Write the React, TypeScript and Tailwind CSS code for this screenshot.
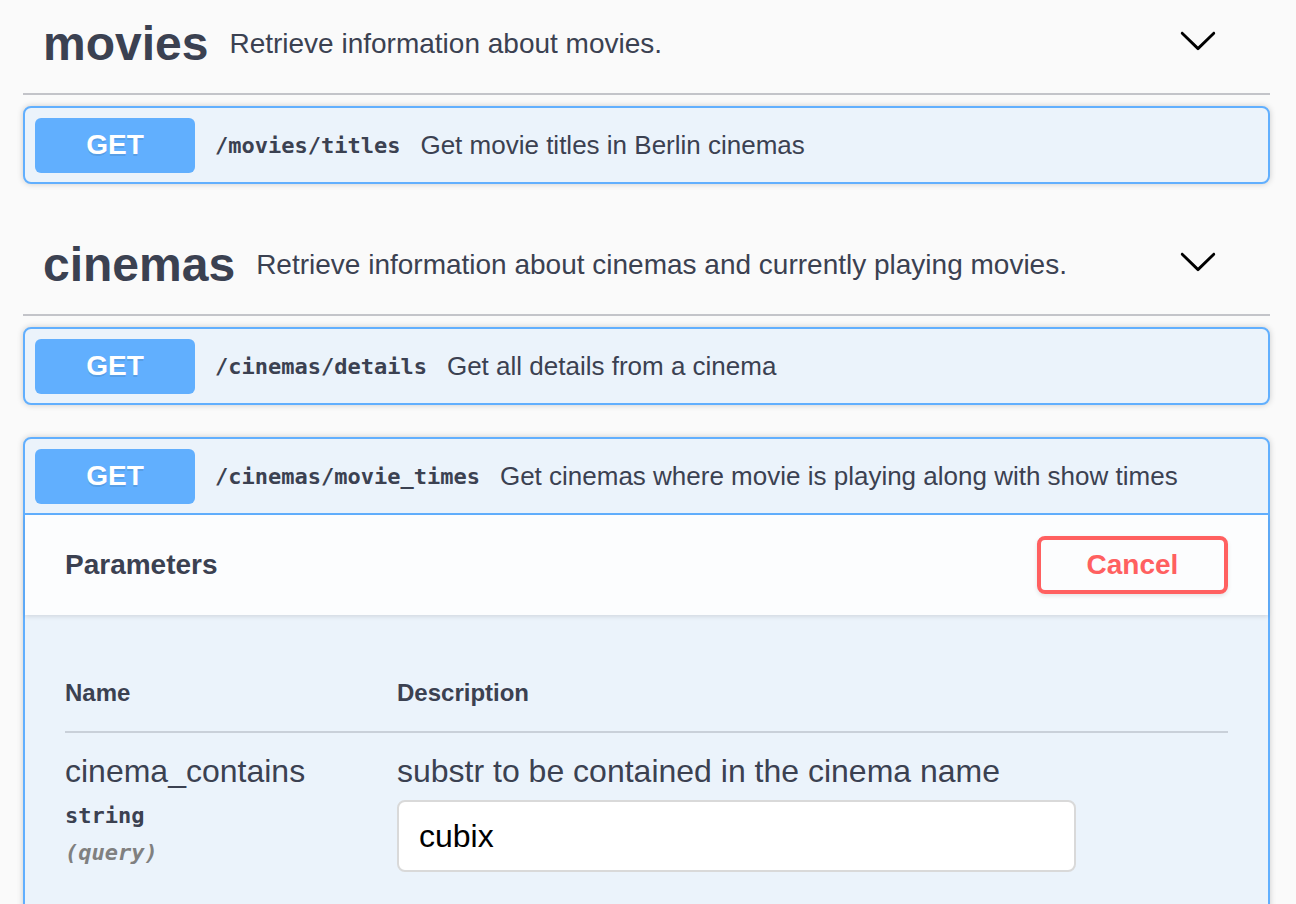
import React from "react";

const sans = "font-['Liberation_Sans',Arial,sans-serif]";
const mono = "font-['DejaVu_Sans_Mono','Liberation_Mono',monospace]";

function Chevron() {
  return (
    <svg width="40" height="40" viewBox="0 0 20 20" className="ml-auto mr-[12px] mb-[8px] shrink-0" aria-hidden="true">
      <path
        fill="#000"
        d="M17.418 6.109c.272-.268.709-.268.979 0s.271.701 0 .969l-7.908 7.83c-.27.268-.707.268-.979 0l-7.908-7.83c-.27-.268-.27-.701 0-.969.271-.268.709-.268.979 0L10 13.25l7.418-7.141z"
      />
    </svg>
  );
}

function TagHeading({ name, desc, className = "" }: { name: string; desc: string; className?: string }) {
  return (
    <div className={`flex items-center h-[100px] border-b-2 border-[#c3c4c9] pl-[20px] pr-[40px] mb-[11px] ${className}`}>
      <span className="text-[48px] font-bold leading-[56px] text-[#3b4151]">{name}</span>
      <span className="ml-[21px] text-[28px] leading-[32px] text-[#3b4151]">{desc}</span>
      <Chevron />
    </div>
  );
}

function Summary({ path, desc, bordered = false }: { path: string; desc: string; bordered?: boolean }) {
  return (
    <div className={`flex items-center h-[74px] px-[10px] box-content ${bordered ? "border-b-2 border-[#61affe]" : ""}`}>
      <div className="flex items-center justify-center w-[160px] h-[55px] rounded-[6px] bg-[#61affe] text-white text-[28px] font-bold [text-shadow:0_2px_0_rgba(0,0,0,0.1)]">
        GET
      </div>
      <span className={`${mono} px-[20px] text-[22px] font-bold text-[#3b4151]`}>{path}</span>
      <span className="text-[26px] text-[#3b4151]">{desc}</span>
    </div>
  );
}

function Opblock({ children, className = "" }: { children: React.ReactNode; className?: string }) {
  return (
    <div className={`rounded-[8px] border-2 border-[#61affe] bg-[#ebf3fb] shadow-[0_0_6px_rgba(0,0,0,0.19)] ${className}`}>
      {children}
    </div>
  );
}

export default function App() {
  return (
    <div className={`${sans} min-h-[904px] bg-[#fafafa] pl-[23px] pr-[26px] overflow-hidden`}>
      <TagHeading name="movies" desc="Retrieve information about movies." className="-mt-[5px]" />
      <Opblock className="mb-[32px]">
        <Summary path="/movies/titles" desc="Get movie titles in Berlin cinemas" />
      </Opblock>

      <TagHeading name="cinemas" desc="Retrieve information about cinemas and currently playing movies." />
      <Opblock className="mb-[32px]">
        <Summary path="/cinemas/details" desc="Get all details from a cinema" />
      </Opblock>

      <Opblock>
        <Summary path="/cinemas/movie_times" desc="Get cinemas where movie is playing along with show times" bordered />
        <div className="relative flex items-center justify-between h-[100px] px-[40px] bg-[#fcfdfe] shadow-[0_2px_4px_rgba(0,0,0,0.1)]">
          <span className="text-[28px] font-bold text-[#3b4151]">Parameters</span>
          <button className="w-[191px] h-[58px] rounded-[8px] border-[4px] border-[#ff6060] text-[28px] font-bold text-[#ff6060] bg-transparent shadow-[0_2px_4px_rgba(0,0,0,0.1)]">
            Cancel
          </button>
        </div>
        <div className="px-[40px] pt-[40px] pb-[80px]">
          <div className="flex border-b-2 border-[#c9d0d9] py-[24px]">
            <div className="w-[332px] text-[24px] leading-[28px] font-bold text-[#3b4151]">Name</div>
            <div className="text-[24px] leading-[28px] font-bold text-[#3b4151]">Description</div>
          </div>
          <div className="flex pt-[20px]">
            <div className="w-[332px] shrink-0">
              <div className="text-[32px] leading-[37px] text-[#3b4151]">cinema_contains</div>
              <div className={`${mono} mt-[13px] text-[22px] leading-[26px] font-bold text-[#3b4151]`}>string</div>
              <div className={`${mono} mt-[11px] text-[22px] leading-[26px] font-bold italic text-[#808080]`}>(query)</div>
            </div>
            <div>
              <div className="text-[32px] leading-[37px] text-[#3b4151]">substr to be contained in the cinema name</div>
              <input
                readOnly
                value="cubix"
                className="mt-[10px] block w-[679px] h-[72px] rounded-[8px] border-2 border-[#d9d9d9] bg-white pl-[20px] text-[32px] text-black outline-none"
              />
            </div>
          </div>
        </div>
      </Opblock>
    </div>
  );
}
